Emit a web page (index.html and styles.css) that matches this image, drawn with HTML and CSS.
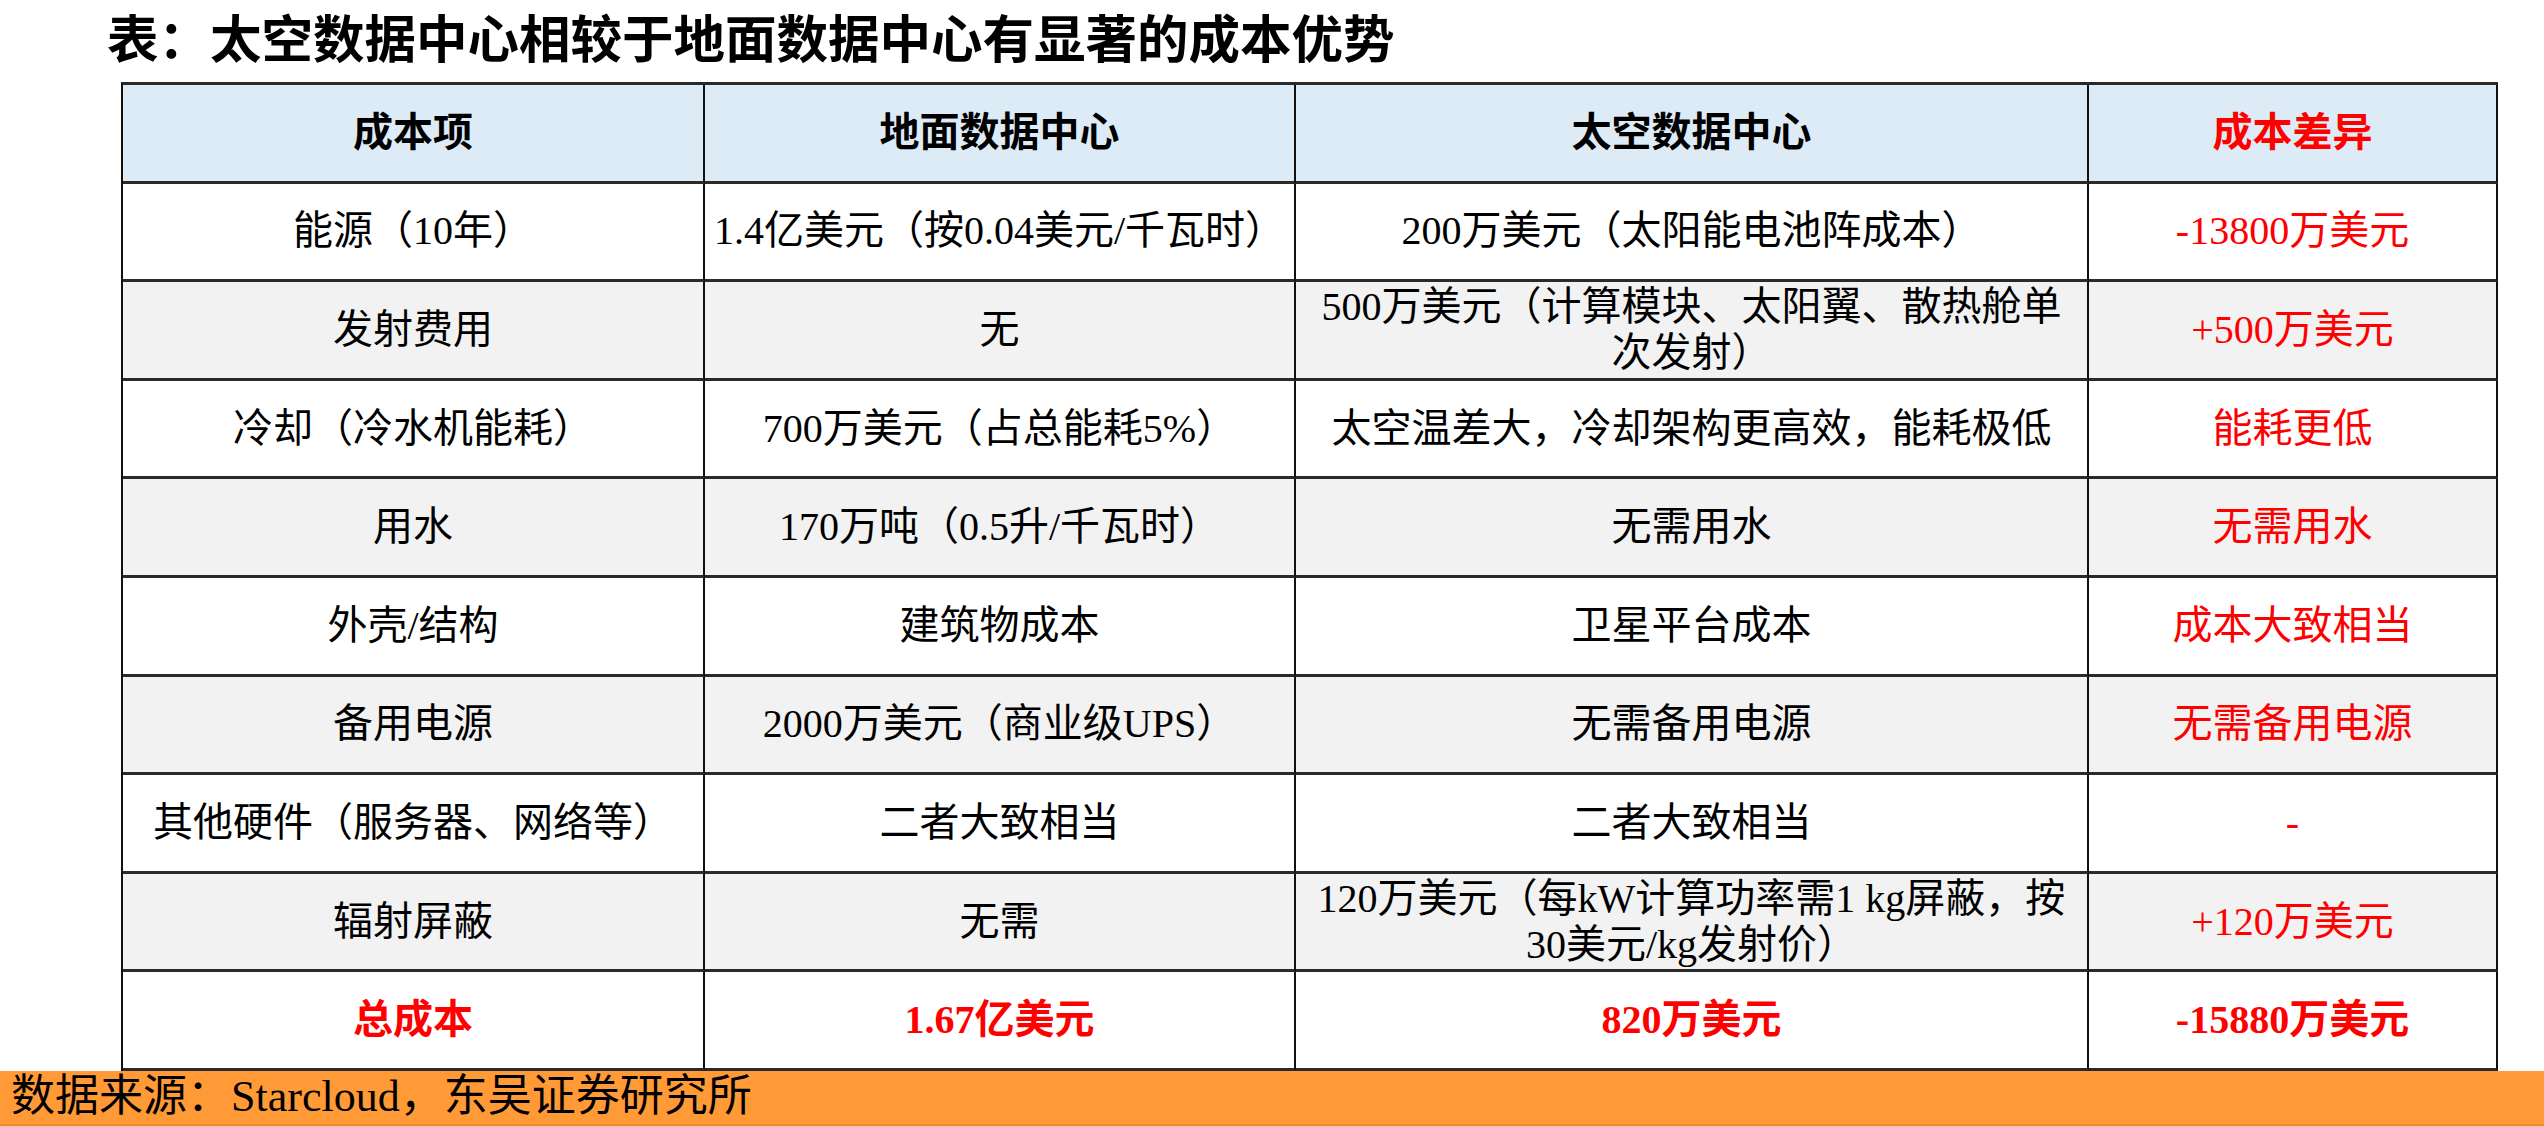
FILE: index.html
```html
<!DOCTYPE html>
<html lang="zh-CN">
<head>
<meta charset="utf-8">
<title>太空数据中心成本对比</title>
<link rel="stylesheet" href="styles.css">
</head>
<body>
<h1 class="title">表：太空数据中心相较于地面数据中心有显著的成本优势</h1>
<div class="grid">
  <div class="cell head">成本项</div>
  <div class="cell head">地面数据中心</div>
  <div class="cell head">太空数据中心</div>
  <div class="cell head red">成本差异</div>

  <div class="cell">能源（10年）</div>
  <div class="cell">1.4亿美元（按0.04美元/千瓦时）</div>
  <div class="cell">200万美元（太阳能电池阵成本）</div>
  <div class="cell red">-13800万美元</div>

  <div class="cell alt">发射费用</div>
  <div class="cell alt">无</div>
  <div class="cell alt">500万美元（计算模块、太阳翼、散热舱单<br>次发射）</div>
  <div class="cell alt red">+500万美元</div>

  <div class="cell">冷却（冷水机能耗）</div>
  <div class="cell">700万美元（占总能耗5%）</div>
  <div class="cell">太空温差大，冷却架构更高效，能耗极低</div>
  <div class="cell red">能耗更低</div>

  <div class="cell alt">用水</div>
  <div class="cell alt">170万吨（0.5升/千瓦时）</div>
  <div class="cell alt">无需用水</div>
  <div class="cell alt red">无需用水</div>

  <div class="cell">外壳/结构</div>
  <div class="cell">建筑物成本</div>
  <div class="cell">卫星平台成本</div>
  <div class="cell red">成本大致相当</div>

  <div class="cell alt">备用电源</div>
  <div class="cell alt">2000万美元（商业级UPS）</div>
  <div class="cell alt">无需备用电源</div>
  <div class="cell alt red">无需备用电源</div>

  <div class="cell">其他硬件（服务器、网络等）</div>
  <div class="cell">二者大致相当</div>
  <div class="cell">二者大致相当</div>
  <div class="cell red">-</div>

  <div class="cell alt">辐射屏蔽</div>
  <div class="cell alt">无需</div>
  <div class="cell alt">120万美元（每kW计算功率需1 kg屏蔽，按<br>30美元/kg发射价）</div>
  <div class="cell alt red">+120万美元</div>

  <div class="cell total">总成本</div>
  <div class="cell total">1.67亿美元</div>
  <div class="cell total">820万美元</div>
  <div class="cell total">-15880万美元</div>
</div>
<div class="footer">数据来源：Starcloud，东吴证券研究所</div>
</body>
</html>
```

FILE: styles.css
```css
html, body {
  margin: 0;
  padding: 0;
  background: #ffffff;
}

body {
  width: 2544px;
  height: 1126px;
  overflow: hidden;
  font-family: "Liberation Serif", "Noto Sans CJK SC", serif;
  color: #000000;
}

.title {
  margin: 0;
  padding-left: 107px;
  height: 82px;
  line-height: 82px;
  font-size: 51.5px;
  font-weight: 700;
  white-space: nowrap;
}

.grid {
  display: grid;
  grid-template-columns: 582px 591px 793px 409px;
  grid-auto-rows: 98.6px;
  margin-left: 121px;
  width: max-content;
  border-top: 3px solid #2a2a2a;
  border-left: 2px solid #111111;
}

.cell {
  box-sizing: border-box;
  border-right: 2px solid #111111;
  border-bottom: 3px solid #2a2a2a;
  display: flex;
  align-items: center;
  justify-content: center;
  text-align: center;
  font-size: 40px;
  line-height: 46px;
  white-space: nowrap;
  background: #ffffff;
}

.head {
  background: #ddebf7;
  font-weight: 700;
}

.alt {
  background: #f2f2f2;
}

.red {
  color: #ff0000;
}

.total {
  color: #ff0000;
  font-weight: 700;
}

.footer {
  box-sizing: border-box;
  height: 57px;
  padding-left: 11px;
  background: #ff9a36;
  border-bottom: 2px solid #bfbfbf;
  box-shadow: inset 0 -2px 0 #f08a2a;
  font-size: 44px;
  line-height: 52px;
  white-space: nowrap;
}
```
